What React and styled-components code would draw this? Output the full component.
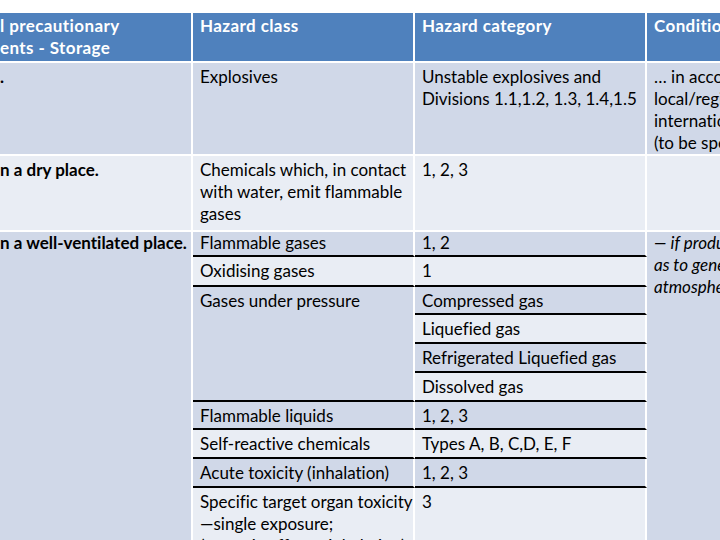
import styled, { createGlobalStyle } from "styled-components";

const GlobalStyle = createGlobalStyle`
  html, body {
    margin: 0;
    padding: 0;
    background: #ffffff;
    overflow: hidden;
  }
`;

const Page = styled.div`
  box-sizing: border-box;
  width: 720px;
  height: 540px;
  padding-top: 13px;
  overflow: hidden;
  background: #ffffff;
`;

const Table = styled.table`
  border-collapse: separate;
  border-spacing: 0;
  table-layout: fixed;
  width: 897px;
  font-family: Lato, "Liberation Sans", sans-serif;
  font-size: 17px;
  line-height: 22px;
  font-variant-ligatures: none;
  color: #000000;
`;

const Row = styled.tr`
  height: ${(p) => p.$h}px;
`;

const tones = {
  head: "#4f81bd",
  dark: "#d0d8e8",
  light: "#e9edf4",
};

const Cell = styled.td`
  box-sizing: border-box;
  vertical-align: top;
  padding: ${(p) => (p.$pt ?? 3)}px 6px 0 ${(p) => (p.$edge ? 0 : 7)}px;
  background: ${(p) => tones[p.$tone || "dark"]};
  border-right: 2px solid #ffffff;
  border-bottom: 2px solid ${(p) => (p.$line ? "#000000" : "#ffffff")};
  white-space: nowrap;
  overflow: hidden;
  font-weight: ${(p) => (p.$bold ? 700 : 400)};
  font-style: ${(p) => (p.$italic ? "italic" : "normal")};
`;

const HeadCell = styled(Cell).attrs({ as: "th", $tone: "head", $bold: true })`
  color: #ffffff;
  text-align: left;
  padding-top: 2px;
  letter-spacing: 0.4px;
`;

export default function App() {
  return (
    <Page>
      <GlobalStyle />
      <Table>
        <colgroup>
          <col style={{ width: 193 }} />
          <col style={{ width: 222 }} />
          <col style={{ width: 232 }} />
          <col style={{ width: 250 }} />
        </colgroup>
        <thead>
          <Row $h={50}>
            <HeadCell $edge>
              l precautionary
              <br />
              ents - Storage
            </HeadCell>
            <HeadCell>Hazard class</HeadCell>
            <HeadCell>Hazard category</HeadCell>
            <HeadCell>Conditions for use</HeadCell>
          </Row>
        </thead>
        <tbody>
          <Row $h={93}>
            <Cell $edge $bold>.</Cell>
            <Cell>Explosives</Cell>
            <Cell>
              Unstable explosives and
              <br />
              Divisions 1.1,1.2, 1.3, 1.4,1.5
            </Cell>
            <Cell>
              … in accordance with
              <br />
              local/regional/national/
              <br />
              international regulations
              <br />
              (to be specified).
            </Cell>
          </Row>
          <Row $h={76}>
            <Cell $edge $bold $tone="light">n a dry place.</Cell>
            <Cell $tone="light">
              Chemicals which, in contact
              <br />
              with water, emit flammable
              <br />
              gases
            </Cell>
            <Cell $tone="light">1, 2, 3</Cell>
            <Cell $tone="light" />
          </Row>
          <Row $h={25}>
            <Cell $edge $bold $pt={0} rowSpan={10}>
              n a well-ventilated place.
            </Cell>
            <Cell $pt={0} $line>Flammable gases</Cell>
            <Cell $pt={0} $line>1, 2</Cell>
            <Cell $pt={0} $italic rowSpan={10}>
              — if product is so volatile
              <br />
              as to generate an explosive
              <br />
              atmosphere.
            </Cell>
          </Row>
          <Row $h={30}>
            <Cell $tone="light" $line>Oxidising gases</Cell>
            <Cell $tone="light" $line>1</Cell>
          </Row>
          <Row $h={28}>
            <Cell $line rowSpan={4}>Gases under pressure</Cell>
            <Cell $line>Compressed gas</Cell>
          </Row>
          <Row $h={29}>
            <Cell $tone="light" $line>Liquefied gas</Cell>
          </Row>
          <Row $h={29}>
            <Cell $line>Refrigerated Liquefied gas</Cell>
          </Row>
          <Row $h={29}>
            <Cell $tone="light" $line>Dissolved gas</Cell>
          </Row>
          <Row $h={28}>
            <Cell $line>Flammable liquids</Cell>
            <Cell $line>1, 2, 3</Cell>
          </Row>
          <Row $h={29}>
            <Cell $tone="light" $line>Self-reactive chemicals</Cell>
            <Cell $tone="light" $line>Types A, B, C,D, E, F</Cell>
          </Row>
          <Row $h={29}>
            <Cell $line>Acute toxicity (inhalation)</Cell>
            <Cell $line>1, 2, 3</Cell>
          </Row>
          <Row $h={72}>
            <Cell $tone="light">
              Specific target organ toxicity
              <br />
              —single exposure;
              <br />
              (narcotic effects; inhalation)
            </Cell>
            <Cell $tone="light">3</Cell>
          </Row>
        </tbody>
      </Table>
    </Page>
  );
}
